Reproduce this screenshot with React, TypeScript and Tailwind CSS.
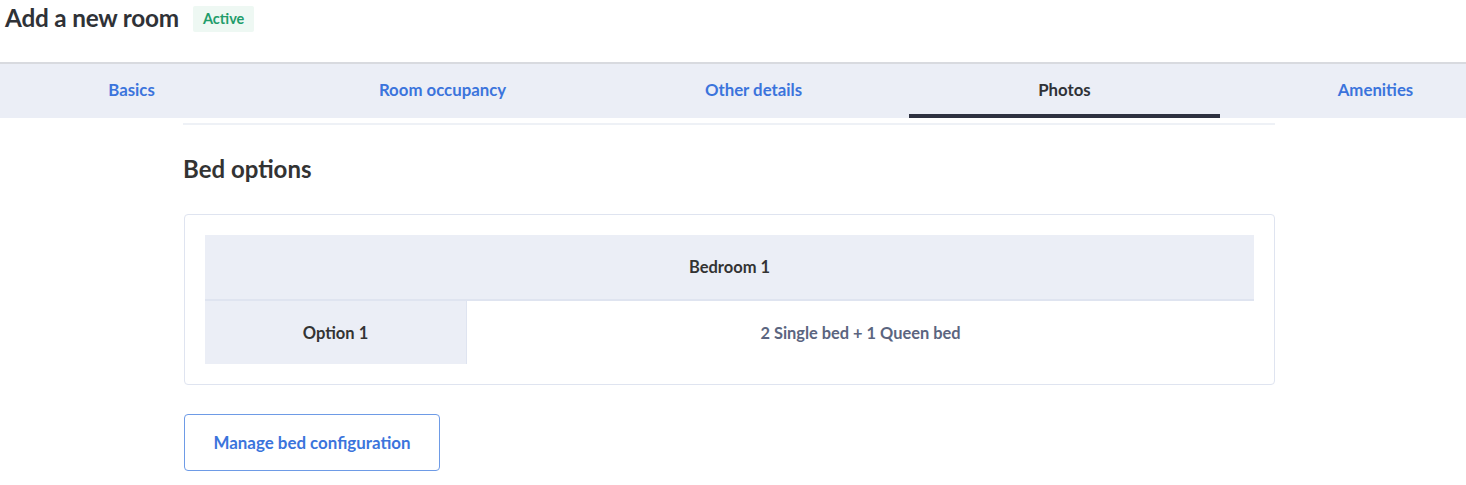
import React from "react";

const tabs = ["Basics", "Room occupancy", "Other details", "Photos", "Amenities"];

export default function App() {
  return (
    <div className="w-[1466px] h-[485px] bg-white overflow-hidden text-[#333840]" style={{ fontFamily: "Lato, 'Noto Sans', sans-serif" }}>
      <div className="flex items-center h-[37px] pl-[5px]">
        <h1 className="text-[24.3px] font-bold text-[#2f3237] leading-none tracking-[-0.2px]">Add a new room</h1>
        <span className="ml-[14px] bg-[#eef8f3] text-[#1f9d6b] text-[14.5px] font-bold px-[10px] h-[26px] flex items-center rounded-[2px]">Active</span>
      </div>
      <div className="mt-[25px] border-t-2 border-[#d8dadf] bg-[#ebeef6] h-[56px] overflow-hidden">
        <div className="flex -ml-[24px] h-full">
          {tabs.map((t) => (
            <div key={t} className={`w-[311px] shrink-0 flex items-center justify-center pb-[3px] text-[16.8px] font-bold relative ${t === "Photos" ? "text-[#2f3237]" : "text-[#3b74dc]"}`}>
              {t}
              {t === "Photos" && <div className="absolute bottom-0 left-0 right-0 h-[4px] bg-[#2e3140]" />}
            </div>
          ))}
        </div>
      </div>
      <div className="ml-[183px] w-[1092px]">
        <div className="mt-[5px] h-[2px] bg-[#eef1f6]" />
        <h2 className="mt-[29px] text-[24px] font-bold text-[#333333] leading-[30px]">Bed options</h2>
        <div className="mt-[30px] border border-[#dfe4f0] rounded-[4px] p-[20px] ml-[1px]">
          <div className="bg-[#ebeef6] h-[66px] flex items-center justify-center text-[16.5px] font-bold text-[#333333] border-b-2 border-[#dfe4f0]">Bedroom 1</div>
          <div className="flex h-[63px]">
            <div className="w-[262px] bg-[#ebeef6] border-r border-[#dfe4f0] flex items-center justify-center pt-[2px] text-[16.5px] font-bold text-[#333333]">Option 1</div>
            <div className="flex-1 flex items-center justify-center pt-[2px] text-[16.4px] font-bold text-[#5b6580]">2 Single bed + 1 Queen bed</div>
          </div>
        </div>
        <button className="mt-[29px] ml-[1px] w-[256px] h-[57px] border border-[#6e9be6] rounded-[4px] text-[#3b74dc] text-[16.9px] font-bold bg-white">Manage bed configuration</button>
      </div>
    </div>
  );
}
